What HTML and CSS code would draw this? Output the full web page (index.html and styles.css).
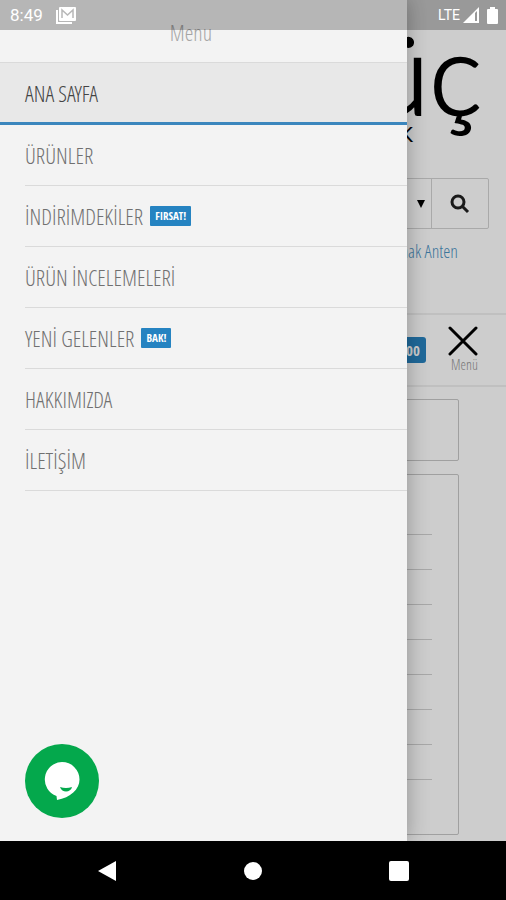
FILE: index.html
```
<!DOCTYPE html>
<html lang="tr">
<head>
    <meta charset="UTF-8">
    <meta name="viewport" content="width=device-width, initial-scale=1.0">
    <title>Ana Sayfa</title>
    <link rel="stylesheet" href="styles.css">
</head>
<body>
    <div class="screen">
        <div class="page">
            <header class="brand">
                <a href="#" class="logo">üç</a>
                <span class="tagline">K</span>
            </header>

            <form class="search">
                <div class="search-box">
                    <label class="category">
                        <select aria-label="Kategori"><option></option></select>
                        <svg width="8" height="8" viewBox="0 0 8 8"><path d="M0 0h8L4 8z"/></svg>
                    </label>
                    <button type="button" aria-label="Ara">
                        <svg width="20" height="20" viewBox="0 0 20 20" fill="none" stroke="#1a1a1a" stroke-width="3"><circle cx="8" cy="8" r="6"/><path d="M12 12l6 6"/></svg>
                    </button>
                </div>
                <a href="#" class="popular">Çanak Anten</a>
            </form>

            <div class="toolbar">
                <a href="#" class="cart">0,00</a>
                <button type="button" class="menu-toggle">
                    <svg width="30" height="30" viewBox="0 0 30 30" stroke="#000" stroke-width="3" stroke-linecap="round"><path d="M2 2l26 26M28 2L2 28"/></svg>
                    <span>Menü</span>
                </button>
            </div>

            <main>
                <section class="box"></section>
                <section class="box box-list">
                    <ul>
                        <li></li>
                        <li></li>
                        <li></li>
                        <li></li>
                        <li></li>
                        <li></li>
                        <li></li>
                        <li></li>
                    </ul>
                </section>
            </main>
        </div>

        <aside class="drawer">
            <div class="drawer-title">Menu</div>
            <nav>
                <a href="#" class="active">ANA SAYFA</a>
                <a href="#">ÜRÜNLER</a>
                <a href="#">İNDİRİMDEKİLER <span class="tag">FIRSAT!</span></a>
                <a href="#">ÜRÜN İNCELEMELERİ</a>
                <a href="#">YENİ GELENLER <span class="tag">BAK!</span></a>
                <a href="#">HAKKIMIZDA</a>
                <a href="#">İLETİŞİM</a>
            </nav>
        </aside>

        <button type="button" class="chat" aria-label="Canlı destek">
            <svg width="36" height="40" viewBox="0 0 36 40">
                <path fill="#fff" d="M18 1a17.500 17.500 0 0 1 17.500 17.500c0 10-9 18-22.500 20.500l-.5-4A17.500 17.500 0 0 1 18 1z"/>
                <path fill="#04a84c" d="M16 26q6 2 12 0c-1 5.500-10 6.500-12 0z"/>
            </svg>
        </button>

        <div class="status-bar">
            <span>8:49</span>
            <svg width="20" height="17" viewBox="0 0 20 17">
                <path fill="none" stroke="#fff" stroke-width="2" d="M1 3v13h15"/>
                <rect x="3" y="0" width="17" height="14" rx="1" fill="#fff"/>
                <path fill="none" stroke="#b8b8b8" stroke-width="1.500" d="M6 11V3l5.500 5L17 3v8"/>
            </svg>
            <span class="network">LTE</span>
            <svg width="16" height="16" viewBox="0 0 16 16"><path fill="#fff" fill-rule="evenodd" d="M0 16L16 0v16zM12 6v8h2V4z"/></svg>
            <svg class="battery" width="11" height="17" viewBox="0 0 11 17"><path fill="#fff" d="M3 0h5v2h2q1 0 1 1v13q0 1-1 1H1q-1 0-1-1V3q0-1 1-1h2z"/></svg>
        </div>
    </div>

    <footer class="nav-bar">
        <button type="button" aria-label="Geri"><svg width="20" height="22" viewBox="0 0 20 22"><path fill="#fff" d="M19 1v20L1 11z"/></svg></button>
        <button type="button" aria-label="Ana ekran"><svg width="20" height="20" viewBox="0 0 20 20"><circle cx="10" cy="10" r="9" fill="#fff"/></svg></button>
        <button type="button" aria-label="Son uygulamalar"><svg width="20" height="20" viewBox="0 0 20 20"><rect width="20" height="20" rx="2" fill="#fff"/></svg></button>
    </footer>
</body>
</html>
```
FILE: styles.css
```
* {
    box-sizing: border-box;
}
body {
    margin: 0;
    height: 100vh;
    display: flex;
    flex-direction: column;
    font-family: "Open Sans Condensed Light", "Liberation Sans Narrow", "Open Sans", sans-serif;
    font-weight: 300;
    background: #000;
}
a {
    text-decoration: none;
}
button {
    padding: 0;
    border: 0;
    background: none;
    font-family: inherit;
    font-weight: inherit;
}
svg {
    display: block;
}

.screen {
    position: relative;
    flex: 1;
    min-height: 0;
    overflow: hidden;
}
.page {
    height: 100%;
    background: #cdcdcd;
    display: flex;
    flex-direction: column;
}

/* shop page behind the menu */
.brand {
    height: 178px;
    padding: 22px 24px 0 0;
    text-align: right;
}
.logo {
    display: block;
    height: 100px;
    font-family: Lato, sans-serif;
    font-size: 112px;
    line-height: 100px;
    color: #000;
    -webkit-text-stroke: 2px #000;
}
.tagline {
    display: block;
    padding-right: 69px;
    font-family: Lato, sans-serif;
    font-size: 22px;
    font-weight: 400;
    line-height: 24px;
    color: #000;
}
.search {
    height: 135px;
    padding: 0 17px;
}
.search-box {
    display: flex;
    height: 51px;
    border: 1px solid #a9a9a9;
    border-radius: 2px;
}
.category {
    flex: 1;
    display: flex;
    align-items: center;
    padding-right: 6px;
}
.category select {
    flex: 1;
    height: 100%;
    border: 0;
    background: none;
    appearance: none;
}
.search-box button {
    width: 57px;
    display: flex;
    align-items: center;
    justify-content: center;
    border-left: 1px solid #a9a9a9;
}
.popular {
    display: block;
    margin-top: 10px;
    padding-right: 31px;
    font-size: 18px;
    line-height: 24px;
    text-align: right;
    color: #3c759b;
}
.toolbar {
    height: 74px;
    padding: 0 28px 0 0;
    display: flex;
    align-items: center;
    justify-content: flex-end;
    gap: 20px;
    border-top: 2px solid #c0c0c0;
    border-bottom: 2px solid #c0c0c0;
}
.cart {
    padding: 0 6px;
    border-radius: 3px;
    background: #20699a;
    color: #cdcdcd;
    font-family: "Open Sans Condensed", "Liberation Sans Narrow", "Open Sans", sans-serif;
    font-size: 15px;
    font-weight: 700;
    line-height: 26px;
}
.menu-toggle {
    display: flex;
    flex-direction: column;
    align-items: flex-end;
    width: 32px;
    font-size: 14px;
    line-height: 18px;
    color: #777;
}
main {
    flex: 1;
    padding: 12px 47px 6px;
    display: flex;
    flex-direction: column;
    gap: 13px;
}
.box {
    height: 62px;
    border: 1px solid #a0a0a0;
    border-radius: 2px;
}
.box-list {
    flex: 1;
    height: auto;
    padding: 25px 26px;
}
.box-list ul {
    margin: 0;
    padding: 0;
    list-style: none;
}
.box-list li {
    height: 35px;
    border-bottom: 1px solid #a8a8a8;
}

/* slide-out menu */
.drawer {
    position: absolute;
    top: 0;
    bottom: 0;
    left: 0;
    width: 80.4%;
    background: #f3f3f3;
    box-shadow: 0 0 20px rgba(0, 0, 0, .3);
}
.drawer-title {
    height: 63px;
    padding: 19px 25px 0 0;
    border-bottom: 1px solid #dadada;
    text-align: center;
    font-size: 22px;
    line-height: 26px;
    color: #a5a5a5;
}
.drawer nav a {
    display: flex;
    align-items: center;
    gap: 7px;
    height: 61px;
    margin-left: 25px;
    border-bottom: 1px solid #dadada;
    font-size: 22px;
    color: #707070;
}
.drawer nav .active {
    height: 62px;
    margin-left: 0;
    padding-left: 25px;
    border-bottom: 3px solid #3b86bd;
    background: #e8e8e8;
    color: #444;
}
.tag {
    padding: 0 5px;
    border-radius: 1px;
    background: #2583c1;
    color: #fff;
    font-family: "Open Sans Condensed", "Liberation Sans Narrow", "Open Sans", sans-serif;
    font-size: 11px;
    font-weight: 700;
    line-height: 20px;
}
.chat {
    position: absolute;
    left: 25px;
    bottom: 23px;
    width: 74px;
    height: 74px;
    display: flex;
    align-items: center;
    justify-content: center;
    border-radius: 50%;
    background: #04a84c;
}

/* phone system bars */
.status-bar {
    position: absolute;
    top: 0;
    left: 0;
    right: 0;
    height: 30px;
    padding: 0 8px 0 10px;
    display: flex;
    align-items: center;
    background: rgba(0, 0, 0, .25);
    color: #fff;
    font-family: Roboto, sans-serif;
    font-size: 17px;
    font-weight: 400;
}
.status-bar svg {
    margin-left: 13px;
}
.status-bar .network {
    margin-left: auto;
    font-size: 14px;
}
.status-bar .network + svg {
    margin-left: 3px;
}
.status-bar .battery {
    margin-left: 8px;
}
.nav-bar {
    height: 59px;
    padding: 0 34px;
    display: flex;
    align-items: center;
}
.nav-bar button {
    flex: 1;
    display: flex;
    justify-content: center;
}
```
